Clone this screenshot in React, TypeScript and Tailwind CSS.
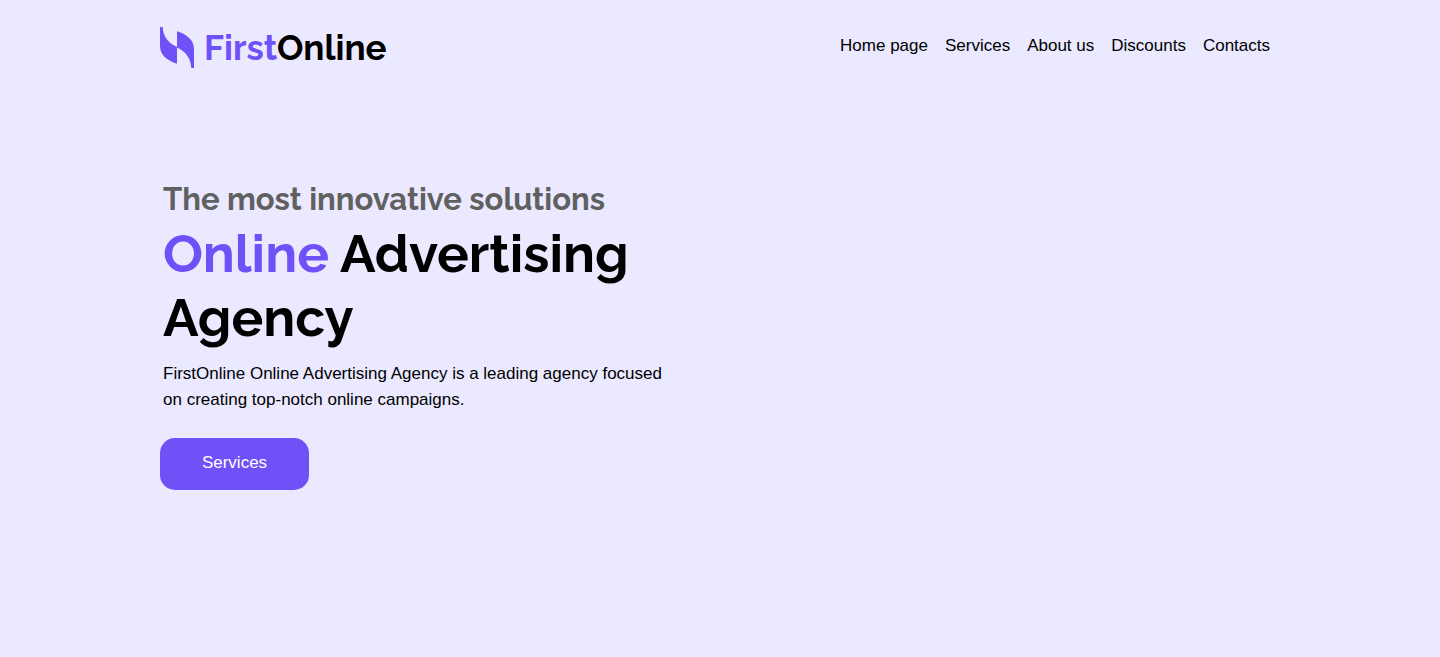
const navItems = [
  { label: "Home page", href: "#home" },
  { label: "Services", href: "#services" },
  { label: "About us", href: "#about" },
  { label: "Discounts", href: "#discounts" },
  { label: "Contacts", href: "#contacts" },
];

function LogoMark() {
  return (
    <svg className="h-[41px] w-[34px] shrink-0" viewBox="0 0 34 41" fill="#7051f8" aria-hidden="true">
      <path d="M0 0H2.700C3 9 8 16 17 20V36.700C7 33.500 0 28 0 19Z" />
      <path d="M17 4.300C27 7.500 34 13 34 22V41H31.300C31 32 26 24.500 17 20.500Z" />
    </svg>
  );
}

function Header() {
  return (
    <header className="flex items-start justify-between pt-[27px]">
      <a href="#home" className="flex items-center gap-[10px]">
        <LogoMark />
        <span className="font-['Raleway','Lato',sans-serif] text-[35px] leading-[41px] font-bold">
          <span className="text-[#7051f8]">First</span>Online
        </span>
      </a>
      <nav className="pt-[6px] pr-[10px]">
        <ul className="flex gap-[17px]">
          {navItems.map((item) => (
            <li key={item.label}>
              <a href={item.href}>{item.label}</a>
            </li>
          ))}
        </ul>
      </nav>
    </header>
  );
}

function Hero() {
  return (
    <main className="pt-[111px]">
      <div className="max-w-[520px] pl-[3px]">
        <p className="font-['Raleway','Lato',sans-serif] text-[31px] leading-[40px] font-bold text-[#606060]">
          The most innovative solutions
        </p>
        <h1 className="pt-[2px] font-['Raleway','Lato',sans-serif] text-[53px] leading-[64px] font-bold">
          <span className="text-[#7051f8]">Online</span> Advertising Agency
        </h1>
        <p className="pt-3">
          FirstOnline Online Advertising Agency is a leading agency focused on creating top-notch online campaigns.
        </p>
      </div>
      <button
        type="button"
        className="mt-[25px] h-[52px] w-[149px] rounded-[15px] bg-[#7051f8] pb-[3px] text-white"
      >
        Services
      </button>
    </main>
  );
}

export default function App() {
  return (
    <div className="min-h-screen bg-[#ebe9ff] px-6 font-['Helvetica_Neue','Liberation_Sans',sans-serif] text-[17px] leading-[26px] text-black lg:px-40">
      <Header />
      <Hero />
    </div>
  );
}
